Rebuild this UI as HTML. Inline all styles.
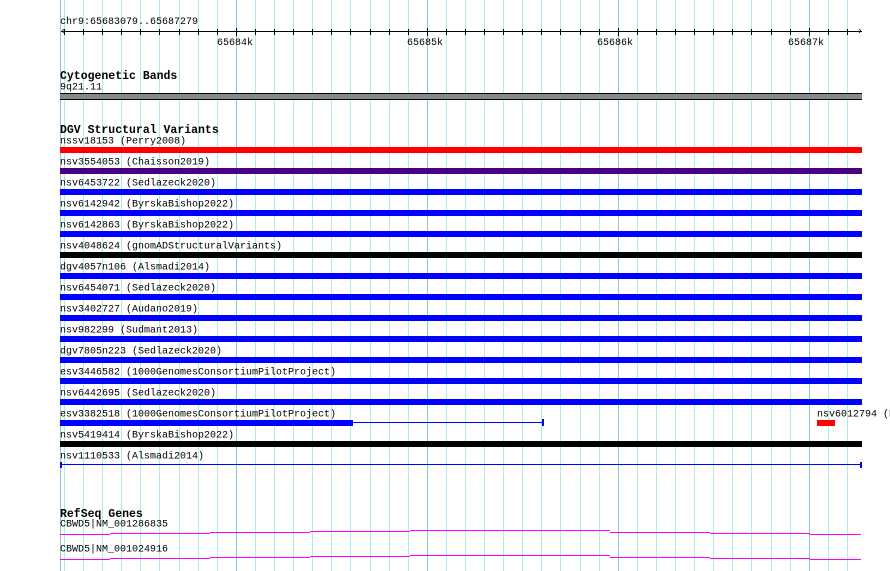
<!DOCTYPE html>
<html><head><meta charset="utf-8"><style>
html,body{margin:0;padding:0;background:#fff;width:890px;height:571px;overflow:hidden;position:relative}
div{position:absolute}
.t{font-family:"Liberation Mono","DejaVu Sans Mono",monospace;font-size:10px;line-height:12px;color:#000;white-space:nowrap;transform:translateY(2.5px)}
.r{transform:translateY(3px)}
.h{font-family:"Liberation Mono","DejaVu Sans Mono",monospace;font-size:11.5px;font-weight:bold;line-height:13px;color:#000;white-space:nowrap;transform:translateY(3px)}
.b{left:60px;width:802px;height:6px}
</style></head><body>
<div id="grid" style="left:0;top:0;width:890px;height:571px"></div>
<div class="t r" style="left:60px;top:14px">chr9:65683079..65687279</div>
<div style="left:61px;top:31px;width:801px;height:1px;background:#000"></div>
<div class="t" style="left:60px;top:24px">&lsaquo;</div>
<div class="t" style="left:857px;top:24px">&rsaquo;</div>
<div id="ticks"></div>
<div class="t r" style="left:217px;top:35px">65684k</div>
<div class="t r" style="left:407px;top:35px">65685k</div>
<div class="t r" style="left:597px;top:35px">65686k</div>
<div class="t r" style="left:788px;top:35px">65687k</div>

<div class="h" style="left:60px;top:67px">Cytogenetic Bands</div>
<div class="t" style="left:60px;top:80px">9q21.11</div>
<div style="left:60px;top:93px;width:802px;height:5px;background:#888;border-top:1px solid #000;border-bottom:1px solid #000"></div>

<div class="h" style="left:60px;top:121px">DGV Structural Variants</div>
<div class="t" style="left:60px;top:134px">nssv18153 (Perry2008)</div>
<div class="b" style="top:147px;background:#f00"></div>
<div class="t" style="left:60px;top:155px">nsv3554053 (Chaisson2019)</div>
<div class="b" style="top:168px;background:#4b0082"></div>
<div class="t" style="left:60px;top:176px">nsv6453722 (Sedlazeck2020)</div>
<div class="b" style="top:189px;background:#00f"></div>
<div class="t" style="left:60px;top:197px">nsv6142942 (ByrskaBishop2022)</div>
<div class="b" style="top:210px;background:#00f"></div>
<div class="t" style="left:60px;top:218px">nsv6142863 (ByrskaBishop2022)</div>
<div class="b" style="top:231px;background:#00f"></div>
<div class="t" style="left:60px;top:239px">nsv4048624 (gnomADStructuralVariants)</div>
<div class="b" style="top:252px;background:#000"></div>
<div class="t" style="left:60px;top:260px">dgv4057n106 (Alsmadi2014)</div>
<div class="b" style="top:273px;background:#00f"></div>
<div class="t" style="left:60px;top:281px">nsv6454071 (Sedlazeck2020)</div>
<div class="b" style="top:294px;background:#00f"></div>
<div class="t" style="left:60px;top:302px">nsv3402727 (Audano2019)</div>
<div class="b" style="top:315px;background:#00f"></div>
<div class="t" style="left:60px;top:323px">nsv982299 (Sudmant2013)</div>
<div class="b" style="top:336px;background:#00f"></div>
<div class="t" style="left:60px;top:344px">dgv7805n223 (Sedlazeck2020)</div>
<div class="b" style="top:357px;background:#00f"></div>
<div class="t" style="left:60px;top:365px">esv3446582 (1000GenomesConsortiumPilotProject)</div>
<div class="b" style="top:378px;background:#00f"></div>
<div class="t" style="left:60px;top:386px">nsv6442695 (Sedlazeck2020)</div>
<div class="b" style="top:399px;background:#00f"></div>
<div class="t" style="left:60px;top:407px">esv3382518 (1000GenomesConsortiumPilotProject)</div>
<div style="left:60px;top:420px;width:293px;height:6px;background:#00f"></div>
<div style="left:353px;top:422px;width:190px;height:1px;background:#00f"></div>
<div style="left:542px;top:419px;width:2px;height:7px;background:#00f"></div>
<div class="t" style="left:817px;top:407px">nsv6012794 (P</div>
<div style="left:817px;top:420px;width:18px;height:6px;background:#f00"></div>
<div class="t" style="left:60px;top:428px">nsv5419414 (ByrskaBishop2022)</div>
<div class="b" style="top:441px;background:#000"></div>
<div class="t" style="left:60px;top:449px">nsv1110533 (Alsmadi2014)</div>
<div style="left:60px;top:464px;width:802px;height:1px;background:#00f"></div>
<div style="left:60px;top:462px;width:2px;height:6px;background:#00f"></div>
<div style="left:860px;top:462px;width:2px;height:6px;background:#00f"></div>

<div class="h" style="left:60px;top:505px">RefSeq Genes</div>
<div class="t" style="left:60px;top:517px">CBWD5|NM_001286835</div>
<div class="t" style="left:60px;top:542px">CBWD5|NM_001024916</div>
<svg style="position:absolute;left:0;top:0" width="890" height="571">
<g stroke="#f0f" stroke-width="1" fill="none" shape-rendering="crispEdges">
<path d="M60 534.5H110M110 533.5H210M210 532.5H310M310 531.5H410M410 530.5H610M610 532.5H710M710 533.5H810M810 534.5H861"/>
<path d="M60 559.5H110M110 558.5H210M210 557.5H310M310 556.5H410M410 555.5H610M610 557.5H710M710 558.5H810M810 559.5H861"/>
</g></svg>
<script>
var g=document.getElementById('grid'),tk=document.getElementById('ticks'),h='',t='';
h+='<div style="left:60px;top:0;width:1px;height:571px;background:#88c8e4"></div>';
for(var bp=65683100;bp<=65687279;bp+=100){
 var x=Math.round(60+(bp-65683079)*802/4200);
 var maj=bp%1000==0;
 h+='<div style="left:'+x+'px;top:0;width:1px;height:571px;background:'+(maj?'#88c8e4':'#aeeaf0')+'"></div>';
 t+='<div style="left:'+x+'px;top:'+(maj?28:29)+'px;width:1px;height:'+(maj?8:6)+'px;background:#000"></div>';
}
g.innerHTML=h;tk.innerHTML=t;
</script>
</body></html>
